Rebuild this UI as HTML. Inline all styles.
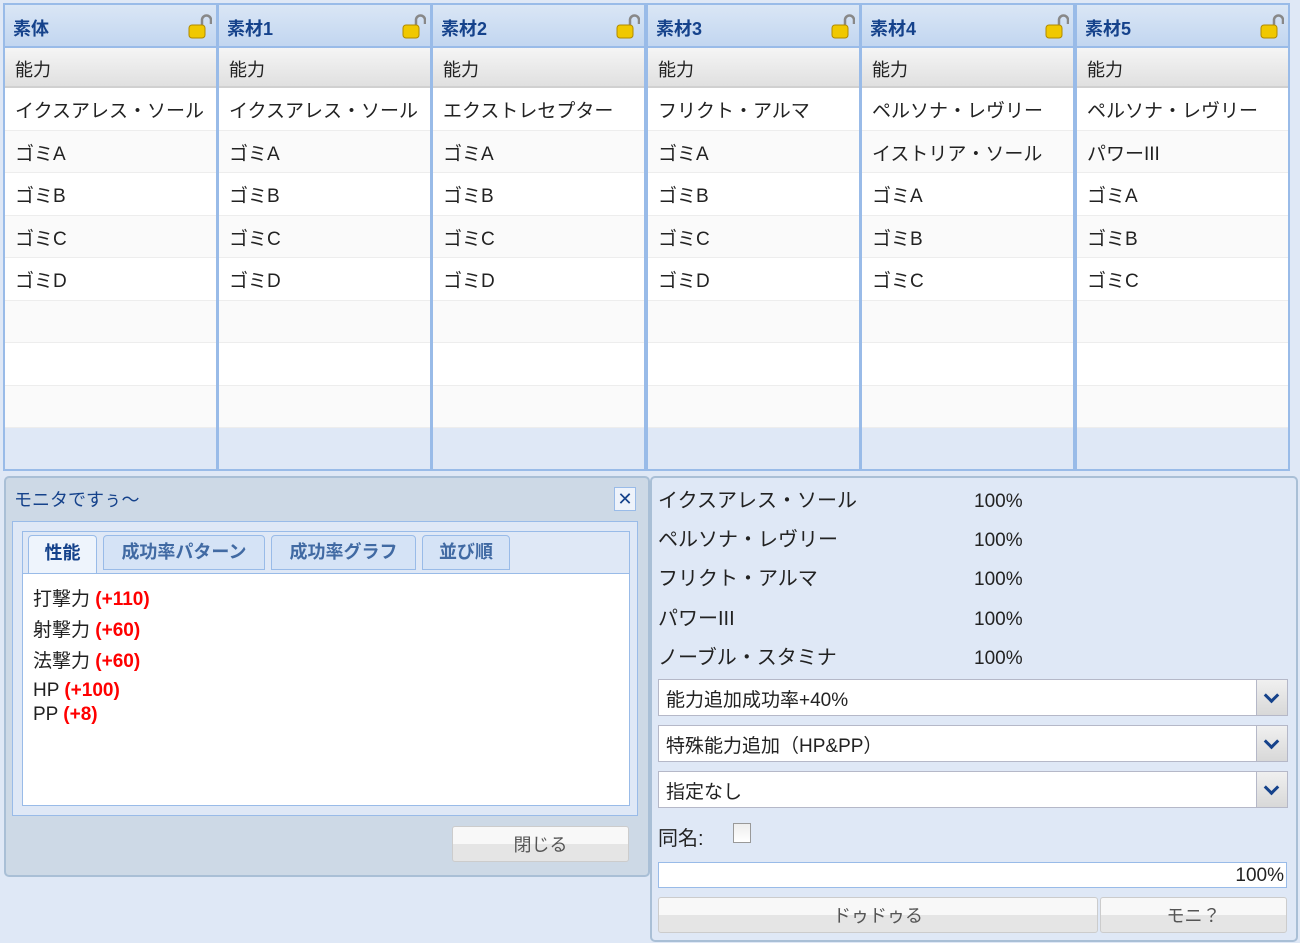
<!DOCTYPE html><html><head><meta charset="utf-8"><style>
body{margin:0;width:1300px;height:943px;background:#dfe8f6;font-family:"Liberation Sans","Noto Sans CJK JP",sans-serif;position:relative;overflow:hidden;font-size:19px;color:#222}
.a{position:absolute;box-sizing:border-box}
.col{position:absolute;top:3px;height:468px;width:215px;border:2px solid #99bbe8;background:#dfe8f6;box-sizing:border-box}
.hd{height:43px;background:linear-gradient(#dae6f5,#c2d6f0);border-bottom:2px solid #99bbe8;font-weight:bold;color:#15428b;padding:10px 8px;box-sizing:border-box;font-size:18px;position:relative}
.lock{position:absolute;right:4px;top:9px;width:24px;height:26px}
.sh{height:40px;background:linear-gradient(#f5f5f5,#e0e0e0);border-bottom:2px solid #d0d0d0;padding:8px 10px;box-sizing:border-box;font-size:18px}
.r{height:42.5px;border-bottom:1px solid #ededed;padding:8px 10px;box-sizing:border-box;background:#fff}
.r:nth-child(even){background:#fafafa}
.sel{position:absolute;left:658px;width:630px;height:37px;border:1px solid #b5b8c8;background:#fff;padding:5px 7px;box-sizing:border-box;font-size:19px}
.sel i{position:absolute;right:0;top:0;width:30px;height:35px;background:linear-gradient(#f0f0f0,#d8d8d8);border-left:1px solid #b5b8c8}
.sel i:after{content:"";position:absolute;left:9px;top:10px;width:8px;height:8px;border-right:3px solid #15428b;border-bottom:3px solid #15428b;transform:rotate(45deg)}
.btn{position:absolute;height:36px;border:1px solid #ccc;border-radius:3px;background:linear-gradient(#f8f8f8 50%,#e5e5e5 50%);text-align:center;line-height:36px;color:#555;font-size:18px;box-sizing:border-box}
.red{color:#f00;font-weight:bold}
</style></head><body>
<div class="col" style="left:3px"><div class="hd">素体<svg class="lock" viewBox="0 0 24 26"><path d="M14 12V6a4.5 4.5 0 0 1 9 0v4" fill="none" stroke="#888" stroke-width="2.5"/><rect x="1" y="11" width="16" height="13" rx="3" fill="#f0c800" stroke="#b08a00"/></svg></div><div class="sh">能力</div><div class="r">イクスアレス・ソール</div><div class="r">ゴミA</div><div class="r">ゴミB</div><div class="r">ゴミC</div><div class="r">ゴミD</div><div class="r"></div><div class="r"></div><div class="r"></div></div>
<div class="col" style="left:217px"><div class="hd">素材1<svg class="lock" viewBox="0 0 24 26"><path d="M14 12V6a4.5 4.5 0 0 1 9 0v4" fill="none" stroke="#888" stroke-width="2.5"/><rect x="1" y="11" width="16" height="13" rx="3" fill="#f0c800" stroke="#b08a00"/></svg></div><div class="sh">能力</div><div class="r">イクスアレス・ソール</div><div class="r">ゴミA</div><div class="r">ゴミB</div><div class="r">ゴミC</div><div class="r">ゴミD</div><div class="r"></div><div class="r"></div><div class="r"></div></div>
<div class="col" style="left:431px"><div class="hd">素材2<svg class="lock" viewBox="0 0 24 26"><path d="M14 12V6a4.5 4.5 0 0 1 9 0v4" fill="none" stroke="#888" stroke-width="2.5"/><rect x="1" y="11" width="16" height="13" rx="3" fill="#f0c800" stroke="#b08a00"/></svg></div><div class="sh">能力</div><div class="r">エクストレセプター</div><div class="r">ゴミA</div><div class="r">ゴミB</div><div class="r">ゴミC</div><div class="r">ゴミD</div><div class="r"></div><div class="r"></div><div class="r"></div></div>
<div class="col" style="left:646px"><div class="hd">素材3<svg class="lock" viewBox="0 0 24 26"><path d="M14 12V6a4.5 4.5 0 0 1 9 0v4" fill="none" stroke="#888" stroke-width="2.5"/><rect x="1" y="11" width="16" height="13" rx="3" fill="#f0c800" stroke="#b08a00"/></svg></div><div class="sh">能力</div><div class="r">フリクト・アルマ</div><div class="r">ゴミA</div><div class="r">ゴミB</div><div class="r">ゴミC</div><div class="r">ゴミD</div><div class="r"></div><div class="r"></div><div class="r"></div></div>
<div class="col" style="left:860px"><div class="hd">素材4<svg class="lock" viewBox="0 0 24 26"><path d="M14 12V6a4.5 4.5 0 0 1 9 0v4" fill="none" stroke="#888" stroke-width="2.5"/><rect x="1" y="11" width="16" height="13" rx="3" fill="#f0c800" stroke="#b08a00"/></svg></div><div class="sh">能力</div><div class="r">ペルソナ・レヴリー</div><div class="r">イストリア・ソール</div><div class="r">ゴミA</div><div class="r">ゴミB</div><div class="r">ゴミC</div><div class="r"></div><div class="r"></div><div class="r"></div></div>
<div class="col" style="left:1075px"><div class="hd">素材5<svg class="lock" viewBox="0 0 24 26"><path d="M14 12V6a4.5 4.5 0 0 1 9 0v4" fill="none" stroke="#888" stroke-width="2.5"/><rect x="1" y="11" width="16" height="13" rx="3" fill="#f0c800" stroke="#b08a00"/></svg></div><div class="sh">能力</div><div class="r">ペルソナ・レヴリー</div><div class="r">パワーIII</div><div class="r">ゴミA</div><div class="r">ゴミB</div><div class="r">ゴミC</div><div class="r"></div><div class="r"></div><div class="r"></div></div>

<div class="a" style="left:4px;top:476px;width:646px;height:401px;background:#cdd9e6;border:2px solid #a9bfd6;border-radius:5px"></div>
<div class="a" style="left:14px;top:486px;font-size:18px;color:#15428b">モニタですぅ～</div>
<div class="a" style="left:614px;top:487px;width:22px;height:24px;border:1px solid #99bbe8;background:#eef3fb;color:#15428b;text-align:center;line-height:22px;font-size:18px">✕</div>
<div class="a" style="left:12px;top:521px;width:626px;height:295px;border:1px solid #99bbe8;background:#dfe8f6"></div>
<div class="a" style="left:22px;top:531px;width:608px;height:42px;border:1px solid #99bbe8;border-bottom:none;background:#dfe8f6"></div>
<div class="a" style="left:28px;top:535px;width:69px;height:38px;background:#eef4fc;border:1px solid #99bbe8;border-bottom:none;border-radius:4px 4px 0 0;text-align:center;line-height:34px;font-weight:bold;color:#15428b;font-size:18px">性能</div>
<div class="a" style="left:103px;top:535px;width:162px;height:35px;background:#d5e3f6;border:1px solid #99bbe8;border-radius:4px 4px 0 0;text-align:center;line-height:32px;font-weight:bold;color:#416aa3;font-size:18px">成功率パターン</div>
<div class="a" style="left:271px;top:535px;width:145px;height:35px;background:#d5e3f6;border:1px solid #99bbe8;border-radius:4px 4px 0 0;text-align:center;line-height:32px;font-weight:bold;color:#416aa3;font-size:18px">成功率グラフ</div>
<div class="a" style="left:422px;top:535px;width:88px;height:35px;background:#d5e3f6;border:1px solid #99bbe8;border-radius:4px 4px 0 0;text-align:center;line-height:32px;font-weight:bold;color:#416aa3;font-size:18px">並び順</div>
<div class="a" style="left:22px;top:573px;width:608px;height:233px;border:1px solid #99bbe8;background:#fff;padding:10px 10px;font-size:19px;line-height:31px">打撃力 <span class="red">(+110)</span><br>射撃力 <span class="red">(+60)</span><br>法撃力 <span class="red">(+60)</span><div style="line-height:24px;margin-top:2px">HP <span class="red">(+100)</span><br>PP <span class="red">(+8)</span></div></div>
<div class="btn" style="left:452px;top:826px;width:177px">閉じる</div>

<div class="a" style="left:650px;top:476px;width:648px;height:466px;border:2px solid #a9bfd6;border-radius:5px;background:#dfe8f6"></div>
<div class="a" style="left:658px;top:482px;line-height:39.2px;font-size:20px">イクスアレス・ソール<br>ペルソナ・レヴリー<br>フリクト・アルマ<br>パワーIII<br>ノーブル・スタミナ</div>
<div class="a" style="left:974px;top:482px;line-height:39.2px;font-size:19px">100%<br>100%<br>100%<br>100%<br>100%</div>
<div class="sel" style="top:679px">能力追加成功率+40%<i></i></div>
<div class="sel" style="top:725px">特殊能力追加（HP&amp;PP）<i></i></div>
<div class="sel" style="top:771px">指定なし<i></i></div>
<div class="a" style="left:658px;top:822px;font-size:20px">同名:</div>
<div class="a" style="left:733px;top:823px;width:18px;height:20px;border:1px solid #999;background:linear-gradient(#eee,#fff)"></div>
<div class="a" style="left:658px;top:862px;width:629px;height:26px;border:1px solid #99bbe8;background:#fff;text-align:right;padding-right:2px;line-height:26px;font-size:19px">100%</div>
<div class="btn" style="left:658px;top:897px;width:440px">ドゥドゥる</div>
<div class="btn" style="left:1100px;top:897px;width:187px">モニ？</div>
</body></html>
